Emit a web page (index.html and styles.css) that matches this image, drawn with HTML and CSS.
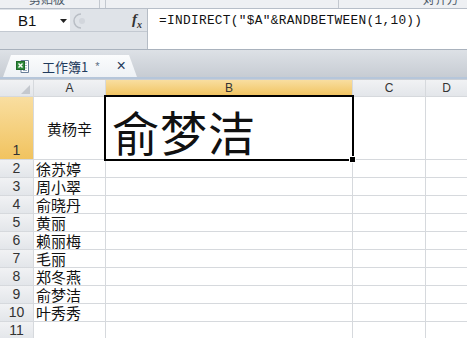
FILE: index.html
```html
<!DOCTYPE html>
<html>
<head>
    <title>工作簿1 - Excel</title>
    <link rel="stylesheet" href="styles.css">
</head>
<body>
    <div class="ribbon">
        <div class="group group-clip"><span class="group-label">剪贴板</span></div>
        <div class="group group-font"></div>
        <div class="group group-align"><span class="group-label">对齐方式</span></div>
    </div>

    <div class="formula-bar">
        <div class="fb-left">
            <div class="name-row">
                <div class="name-box">
                    <span class="cell-ref">B1</span>
                    <svg class="drop" width="7" height="4" viewBox="0 0 7 4"><path d="M0 0h7L3.5 4z" fill="#222"/></svg>
                </div>
                <svg class="grip" width="14" height="18" viewBox="0 0 14 18"><path d="M9 2a7 7 0 0 0 0 14" fill="none" stroke="#b9bec5" stroke-width="1.5"/><circle cx="10" cy="9" r="3" fill="#d2d6dc"/></svg>
                <span class="fx">f<sub>x</sub></span>
            </div>
            <div class="name-pad"></div>
        </div>
        <div class="formula-input">=INDIRECT("$A"&amp;RANDBETWEEN(1,10))</div>
    </div>

    <div class="tab-bar">
        <div class="tab">
            <svg class="xl-icon" width="15" height="15" viewBox="0 0 15 15">
                <path d="M5 1.5h7.5v12H5z" fill="#fff" stroke="#6a7f99"/>
                <path d="M7 4h4M7 6.5h4M7 9h4M7 11.5h4" stroke="#9fb0c4"/>
                <rect x="0.5" y="2.5" width="8" height="8" fill="#2f8a3c" stroke="#1f6a2a"/>
                <path d="M2.5 4.5l4 4M6.5 4.5l-4 4" stroke="#fff" stroke-width="1.4"/>
            </svg>
            <span class="tab-title">工作簿1</span>
            <span class="tab-dirty">*</span>
            <span class="tab-close">×</span>
        </div>
    </div>

    <div class="sheet">
        <div class="hd corner"><span class="corner-mark"></span></div>
        <div class="hd col">A</div>
        <div class="hd col sel">B</div>
        <div class="hd col">C</div>
        <div class="hd col">D</div>

        <div class="hd row sel">1</div>
        <div class="cell center">黄杨辛</div>
        <div class="cell big active">俞梦洁</div>
        <div class="cell"></div>
        <div class="cell"></div>

        <div class="hd row">2</div><div class="cell">徐苏婷</div><div class="cell"></div><div class="cell"></div><div class="cell"></div>
        <div class="hd row">3</div><div class="cell">周小翠</div><div class="cell"></div><div class="cell"></div><div class="cell"></div>
        <div class="hd row">4</div><div class="cell">俞晓丹</div><div class="cell"></div><div class="cell"></div><div class="cell"></div>
        <div class="hd row">5</div><div class="cell">黄丽</div><div class="cell"></div><div class="cell"></div><div class="cell"></div>
        <div class="hd row">6</div><div class="cell">赖丽梅</div><div class="cell"></div><div class="cell"></div><div class="cell"></div>
        <div class="hd row">7</div><div class="cell">毛丽</div><div class="cell"></div><div class="cell"></div><div class="cell"></div>
        <div class="hd row">8</div><div class="cell">郑冬燕</div><div class="cell"></div><div class="cell"></div><div class="cell"></div>
        <div class="hd row">9</div><div class="cell">俞梦洁</div><div class="cell"></div><div class="cell"></div><div class="cell"></div>
        <div class="hd row">10</div><div class="cell">叶秀秀</div><div class="cell"></div><div class="cell"></div><div class="cell"></div>
        <div class="hd row">11</div><div class="cell"></div><div class="cell"></div><div class="cell"></div><div class="cell"></div>
    </div>
</body>
</html>
```

FILE: styles.css
```css
body {
    margin: 0;
    width: 467px;
    height: 338px;
    overflow: hidden;
    background-color: #fff;
    font-family: "Liberation Sans", "Noto Sans CJK SC", sans-serif;
}

/* ribbon leftovers at the top */
.ribbon {
    display: flex;
    height: 8px;
    overflow: hidden;
    background-color: #eef0f3;
    border-bottom: 1px solid #b7bec8;
}

.group {
    height: 8px;
    overflow: hidden;
    position: relative;
}

.group-label {
    display: block;
    margin-top: -9px;
    font-family: "Noto Sans CJK SC", sans-serif;
    font-size: 12px;
    line-height: 15px;
    color: #4c5866;
}

.group-clip {
    width: 106px;
    padding-left: 29px;
    box-sizing: border-box;
    border-right: 1px solid #c3c8cf;
}

.group-font {
    width: 252px;
    margin-left: 5px;
    border-left: 1px solid #c3c8cf;
    border-right: 1px solid #c3c8cf;
}

.group-align {
    padding-left: 84px;
}

/* formula bar */
.formula-bar {
    display: flex;
    height: 40px;
    background-color: #dfe3e8;
    border-bottom: 1px solid #a9b2bd;
}

.fb-left {
    width: 147px;
    display: flex;
    flex-direction: column;
}

.name-row {
    display: flex;
    align-items: center;
    height: 21px;
    margin-top: 1px;
    border-bottom: 1px solid #c3c9d1;
}

.name-box {
    width: 70px;
    height: 21px;
    display: flex;
    align-items: center;
    background-color: #fff;
}

.cell-ref {
    margin-left: 18px;
    font-size: 15px;
    color: #111;
}

.drop {
    margin-left: 24px;
}

.grip {
    margin-left: 2px;
}

.fx {
    margin-left: auto;
    margin-right: 5px;
    font-family: "Liberation Serif", serif;
    font-style: italic;
    font-weight: bold;
    font-size: 15px;
    color: #333;
}

.fx sub {
    font-size: 10px;
}

.name-pad {
    flex: 1;
}

.formula-input {
    flex: 1;
    background-color: #fff;
    border-left: 1px solid #b5bcc5;
    padding: 3px 0 0 11px;
    font-family: "Liberation Mono", monospace;
    font-size: 12.8px;
    letter-spacing: 0.3px;
    line-height: 18px;
    color: #111;
}

/* workbook tab strip */
.tab-bar {
    height: 27px;
    display: flex;
    align-items: flex-end;
    padding-left: 3px;
    background: linear-gradient(#dde1e6, #c7ccd3);
    border-bottom: 2px solid #b6c6da;
}

.tab {
    width: 134px;
    height: 22px;
    display: flex;
    align-items: center;
    padding-left: 13px;
    box-sizing: border-box;
    background: linear-gradient(#fbfcfd, #eef1f5);
    clip-path: polygon(0 100%, 8px 0, 126px 0, 100% 100%);
}

.xl-icon {
    margin-right: 11px;
}

.tab-title {
    font-family: "Noto Sans CJK SC", sans-serif;
    font-size: 13px;
    color: #1f3a5c;
}

.tab-dirty {
    margin-left: 7px;
    font-size: 11px;
    color: #5a6b80;
}

.tab-close {
    margin-left: 17px;
    font-size: 16px;
    color: #1f3a5c;
}

/* grid */
.sheet {
    display: grid;
    grid-template-columns: 33px 71px 246px 72px 1fr;
    grid-template-rows: 16px 62px repeat(10, 17px);
    gap: 1px;
    background-color: #d6d9dd;
    border-top: 1px solid #c9ced5;
}

.hd {
    background: linear-gradient(#f1f2f4, #e3e6ea);
    color: #333;
    font-size: 13px;
    display: flex;
    justify-content: center;
}

.col {
    align-items: center;
    font-size: 12px;
}

.row {
    align-items: flex-end;
    font-size: 14px;
    line-height: 17px;
}

.hd.sel {
    background: linear-gradient(#f9dea0, #f1c35f);
}

.corner {
    position: relative;
}

.corner-mark {
    position: absolute;
    right: 3px;
    bottom: 2px;
    border-left: 9px solid transparent;
    border-bottom: 9px solid #c4c8ce;
}

.cell {
    background-color: #fff;
    font-family: "Noto Sans CJK SC", sans-serif;
    font-size: 15px;
    line-height: 17px;
    color: #111;
    padding-left: 2px;
    display: flex;
    align-items: flex-end;
    white-space: nowrap;
}

.cell.center {
    justify-content: center;
    align-items: center;
    padding-left: 0;
}

.cell.big {
    font-size: 47px;
    line-height: 56px;
    padding-left: 6px;
    letter-spacing: 1px;
}

.active {
    position: relative;
    outline: 2px solid #000;
    outline-offset: 0;
    z-index: 1;
}

.active::after {
    content: "";
    position: absolute;
    right: -4px;
    bottom: -4px;
    width: 5px;
    height: 5px;
    background-color: #000;
    border: 1px solid #fff;
}
```
